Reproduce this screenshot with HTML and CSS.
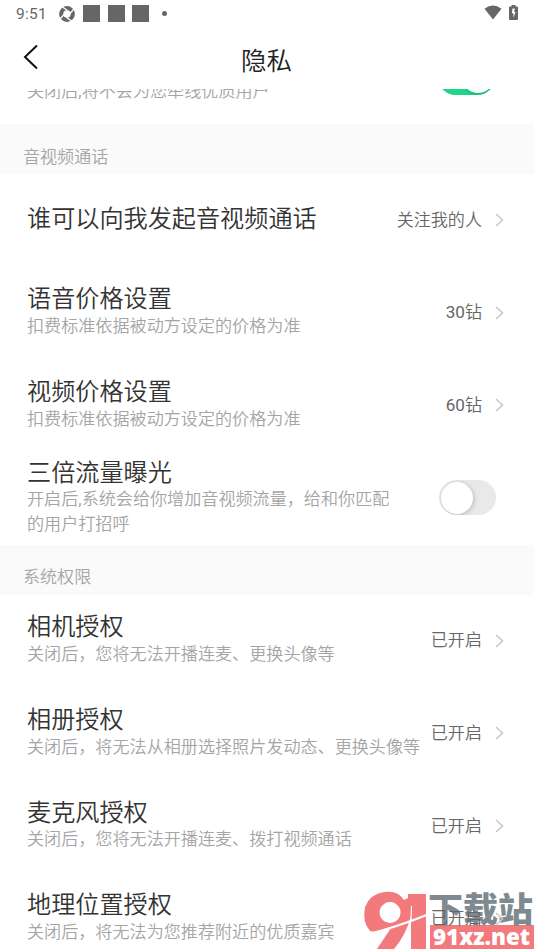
FILE: index.html
```
<!DOCTYPE html>
<html lang="zh-CN">
<head>
<meta charset="utf-8">
<title>隐私</title>
<link rel="stylesheet" href="styles.css">
</head>
<body>
<div class="screen">
  <div class="status">
    <span class="time">9:51</span>
    <svg class="sync" viewBox="0 0 16 16"><circle cx="8" cy="8" r="5.8" fill="none" stroke="#666" stroke-width="4.2"/><path d="M3.500 1l5 3.500M14.500 3.500l-4 4.500M12.500 15l-5-3.500M1.500 12.500l4-4.500" stroke="#fff" stroke-width="1.300"/></svg>
    <i class="block"></i><i class="block"></i><i class="block"></i>
    <i class="dot"></i>
    <svg class="wifi" viewBox="0 0 18 15"><path d="M0.500 3.800Q9-2.800 17.500 3.800L9 14.500z" fill="#666"/></svg>
    <svg class="battery" viewBox="0 0 9 15"><path d="M2.500 0h4v1.500H8Q9 1.500 9 2.500V14Q9 15 8 15H1Q0 15 0 14V2.500Q0 1.500 1 1.500H2.500z" fill="#666"/><path d="M5.800 3.500H3.500L2.800 8.200h1.600v4.500L6.600 7H5.200z" fill="#fff"/></svg>
  </div>
  <header class="header">
    <svg class="back" viewBox="0 0 16 26"><path d="M14 1.500L2 13l12 11.500" fill="none" stroke="#111" stroke-width="2"/></svg>
    <h1>隐私</h1>
  </header>
  <main class="content">
    <div class="list">
      <div class="row first">
        <div class="text"><p class="desc">关闭后<b>,</b>将不会为您牵线优质用户</p></div>
        <div class="toggle on"><i></i></div>
      </div>
      <h2 class="section">音视频通话</h2>
      <div class="row">
        <div class="text single"><p class="title">谁可以向我发起音视频通话</p></div>
        <span class="value">关注我的人</span>
        <svg class="chev" viewBox="0 0 9 14"><path d="M1 1l6.500 6L1 13"/></svg>
      </div>
      <div class="row">
        <div class="text"><p class="title">语音价格设置</p><p class="desc">扣费标准依据被动方设定的价格为准</p></div>
        <span class="value"><b>30</b>钻</span>
        <svg class="chev" viewBox="0 0 9 14"><path d="M1 1l6.500 6L1 13"/></svg>
      </div>
      <div class="row">
        <div class="text"><p class="title">视频价格设置</p><p class="desc">扣费标准依据被动方设定的价格为准</p></div>
        <span class="value"><b>60</b>钻</span>
        <svg class="chev" viewBox="0 0 9 14"><path d="M1 1l6.500 6L1 13"/></svg>
      </div>
      <div class="row tall">
        <div class="text"><p class="title">三倍流量曝光</p><p class="desc">开启后<b>,</b>系统会给你增加音视频流量，给和你匹配<br>的用户打招呼</p></div>
        <div class="toggle"><i></i></div>
      </div>
      <h2 class="section">系统权限</h2>
      <div class="row">
        <div class="text"><p class="title">相机授权</p><p class="desc">关闭后，您将无法开播连麦、更换头像等</p></div>
        <span class="value">已开启</span>
        <svg class="chev" viewBox="0 0 9 14"><path d="M1 1l6.500 6L1 13"/></svg>
      </div>
      <div class="row">
        <div class="text"><p class="title">相册授权</p><p class="desc">关闭后，将无法从相册选择照片发动态、更换头像等</p></div>
        <span class="value">已开启</span>
        <svg class="chev" viewBox="0 0 9 14"><path d="M1 1l6.500 6L1 13"/></svg>
      </div>
      <div class="row">
        <div class="text"><p class="title">麦克风授权</p><p class="desc">关闭后，您将无法开播连麦、拨打视频通话</p></div>
        <span class="value">已开启</span>
        <svg class="chev" viewBox="0 0 9 14"><path d="M1 1l6.500 6L1 13"/></svg>
      </div>
      <div class="row">
        <div class="text"><p class="title">地理位置授权</p><p class="desc">关闭后，将无法为您推荐附近的优质嘉宾</p></div>
        <span class="value over">已开启</span>
        <svg class="chev over" viewBox="0 0 9 14"><path d="M1 1l6.500 6L1 13"/></svg>
      </div>
    </div>
  </main>
  <svg class="watermark" viewBox="0 0 180 70">
    <path fill="#f27a7d" fill-rule="evenodd" d="M30 12Q44 10 50 20L54 18V14H72V69H57V36Q52 55 40 69H23L37 48Q24 54 16 51Q8 42 11 27Q16 14 30 12zM36 22a10.500 10.500 0 1 0 .1 0z"/>
    <path d="M57.500 26L57 40" stroke="#fff" stroke-width="1.200"/>
    <path d="M13 54.500Q40 48 74 34.500" fill="none" stroke="#fff" stroke-width="2.400"/>
    <rect x="76" y="45" width="104" height="24" fill="#f27a7d"/>
    <text class="wm-cn" x="74" y="41.500" textLength="105" lengthAdjust="spacingAndGlyphs">下载站</text>
    <text class="wm-url" x="79" y="65" textLength="97" lengthAdjust="spacingAndGlyphs">91xz.net</text>
  </svg>
</div>
</body>
</html>
```
FILE: styles.css
```
* { box-sizing: border-box; margin: 0; padding: 0; }
body { font-family: Roboto, "Noto Sans CJK SC", sans-serif; background: #fff; }
b { font-weight: 400; }
.screen { position: relative; width: 534px; height: 950px; overflow: hidden; display: flex; flex-direction: column; }
.status { height: 28px; flex: none; display: flex; align-items: center; padding: 0 16px; color: #666; }
.time { width: 43px; font-size: 15.5px; letter-spacing: .3px; }
.sync { width: 16px; height: 16px; margin-right: 8px; margin-top: -1px; }
.block { width: 17px; height: 17px; background: #666; margin: -1px 7.5px 0 0; }
.dot { width: 5px; height: 5px; border-radius: 50%; background: #666; margin: -1px 0 0 5px; }
.wifi { width: 18px; height: 15px; margin-left: auto; margin-right: 7px; margin-top: -3px; }
.battery { width: 9px; height: 15px; margin-top: -3px; }
.header { height: 61px; flex: none; display: grid; grid-template-columns: 40px 1fr 40px; align-items: center; }
.back { width: 16px; height: 26px; margin: -3px 0 0 22.5px; }
.header h1 { font-family: "Noto Sans CJK SC", sans-serif; font-size: 25.5px; font-weight: 350; color: #222; text-align: center; line-height: 34px; margin: 1px 1px 0 0; }
.content { flex: 1; min-height: 0; overflow: hidden; }
.list { margin-top: -57.5px; }
.row { height: 92.7px; display: flex; align-items: center; padding: 0 30px 0 27px; }
.text { flex: 1; white-space: nowrap; min-width: 0; margin-top: -2.6px; }
.single { margin-top: -1px; }
.title { font-size: 24.15px; font-weight: 350; line-height: 29.5px; color: #333; }
.desc { font-size: 17.1px; font-weight: 350; line-height: 24.5px; color: #a5a5a5; margin-top: -.9px; }
.first { padding-right: 38px; }
.first .desc { margin-top: 29px; }
.tall { padding-right: 38px; }
.tall .text { margin-top: -2.5px; }
.value { font-size: 17.07px; font-weight: 350; line-height: 24px; color: #666; margin: -2px 13px 0 0; }
.chev { width: 9px; height: 14px; flex: none; margin-top: -1px; }
.chev path { fill: none; stroke: #c8c8c8; stroke-width: 1.6; }
.section { height: 50px; background: #fafafa; color: #a5a5a5; font-size: 17.07px; font-weight: 350; line-height: 24px; padding: 20.5px 23px 0; }
.toggle { width: 57px; height: 35px; border-radius: 18px; background: #e9e9e9; padding: 1.5px; display: flex; overflow: hidden; margin: -1.5px 0 0 0; }
.toggle i { width: 32px; height: 32px; border-radius: 50%; background: #fff; box-shadow: 1px 1px 5px rgba(0,0,0,.2); }
.toggle.on { background: #20d588; justify-content: flex-end; margin: 0 1px 0 0; padding: 1px 1.5px; }
.watermark { position: absolute; left: 354px; top: 880px; width: 180px; height: 70px; }
.wm-cn { font: 900 34px "Noto Sans CJK SC", sans-serif; fill: #7e8990; }
.wm-url { font: 800 23px "Open Sans", sans-serif; fill: #fff; }
.over { position: relative; z-index: 2; }
```
